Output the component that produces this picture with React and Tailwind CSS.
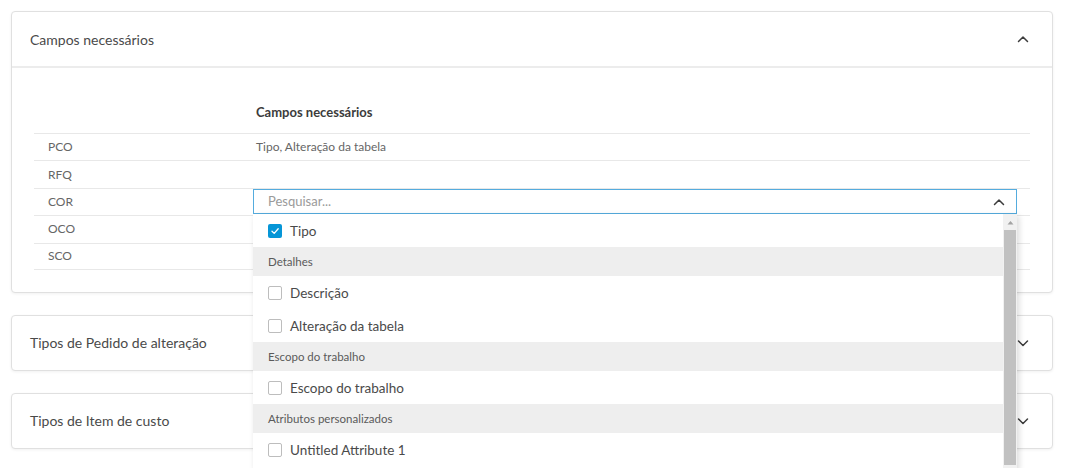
import React from "react";

const font = { fontFamily: "Lato, 'Noto Sans', sans-serif" };

const Chevron = ({ up }) => (
  <svg width="14" height="14" viewBox="0 0 14 14" fill="none">
    <path
      d={up ? "M2.5 9.5 L7 5 L11.5 9.5" : "M2.5 5 L7 9.5 L11.5 5"}
      stroke="#3c3c3c"
      strokeWidth="1.5"
      strokeLinecap="round"
      strokeLinejoin="round"
    />
  </svg>
);

const Check = ({ checked }) =>
  checked ? (
    <span className="flex h-[14px] w-[14px] items-center justify-center rounded-[2px] bg-[#0696d7]">
      <svg width="10" height="10" viewBox="0 0 10 10" fill="none">
        <path d="M2 5.2 L4.2 7.4 L8.2 2.8" stroke="#fff" strokeWidth="1.3" strokeLinecap="round" strokeLinejoin="round" />
      </svg>
    </span>
  ) : (
    <span className="h-[14px] w-[14px] rounded-[2px] border border-[#bdbdbd] bg-white" />
  );

const options = [
  { type: "item", label: "Tipo", checked: true },
  { type: "group", label: "Detalhes" },
  { type: "item", label: "Descrição" },
  { type: "item", label: "Alteração da tabela" },
  { type: "group", label: "Escopo do trabalho" },
  { type: "item", label: "Escopo do trabalho" },
  { type: "group", label: "Atributos personalizados" },
  { type: "item", label: "Untitled Attribute 1" },
];

const rows = [
  { code: "PCO", value: "Tipo, Alteração da tabela" },
  { code: "RFQ", value: "" },
  { code: "COR", value: null },
  { code: "OCO", value: "" },
  { code: "SCO", value: "" },
];

const Dropdown = () => (
  <div className="relative h-[25px] w-[764px]">
    <div className="flex h-[25px] items-center justify-between border border-[#55acde] bg-white pl-[14px] pr-[10px]">
      <span className="text-[13px] text-[#9a9a9a]">Pesquisar...</span>
      <Chevron up />
    </div>
    <div className="absolute left-0 top-[25px] z-10 flex h-[256px] w-[764px] bg-white shadow-[2px_2px_6px_rgba(0,0,0,0.15)]">
      <div className="flex-1">
        {options.map((o, i) =>
          o.type === "group" ? (
            <div key={i} className="flex h-[29px] items-center bg-[#eeeeee] pl-[15px] text-[11.5px] text-[#5a5a5a]">
              {o.label}
            </div>
          ) : (
            <div key={i} className="flex h-[33px] items-center gap-[8px] pl-[15px] text-[13.5px] text-[#4a4a4a]">
              <Check checked={o.checked} />
              <span>{o.label}</span>
            </div>
          )
        )}
      </div>
      <div className="flex w-[14px] flex-col items-center bg-[#f1f1f1]">
        <div className="flex h-[16px] items-center justify-center">
          <svg width="7" height="5" viewBox="0 0 7 5">
            <path d="M0.5 4.5 L3.5 1 L6.5 4.5 Z" fill="#a3a3a3" />
          </svg>
        </div>
        <div className="h-[235px] w-[12px] bg-[#c1c1c1]" />
      </div>
    </div>
  </div>
);

const CollapsedCard = ({ title }) => (
  <div className="flex h-[56px] items-center justify-between rounded-[4px] border border-[#e0e0e0] bg-white pl-[18px] pr-[22px] shadow-[0_1px_3px_rgba(0,0,0,0.06)]">
    <span className="text-[14px] text-[#4a4a4a]">{title}</span>
    <Chevron />
  </div>
);

export default function App() {
  return (
    <div className="min-h-[468px] bg-white px-[11px] pt-[11px]" style={font}>
      <div className="flex w-[1042px] flex-col gap-[22px]">
        <div className="rounded-[4px] border border-[#e0e0e0] bg-white shadow-[0_1px_3px_rgba(0,0,0,0.06)]">
          <div className="flex h-[56px] items-center justify-between border-b-2 border-[#ececec] pl-[18px] pr-[22px]">
            <span className="text-[14px] text-[#4a4a4a]">Campos necessários</span>
            <Chevron up />
          </div>
          <div className="px-[22px] pb-[22px] pt-[30px]">
            <div className="flex h-[35px] pt-[5px]">
              <div className="w-[219px]" />
              <div className="pl-[3px] text-[13px] font-bold text-[#3c3c3c]">Campos necessários</div>
            </div>
            {rows.map((r) => (
              <div key={r.code} className="box-border flex h-[27.4px] items-center border-t border-[#e8e8e8] last:border-b">
                <div className="w-[219px] pl-[14px] text-[12px] text-[#666]">{r.code}</div>
                {r.value === null ? (
                  <Dropdown />
                ) : (
                  <div className="pl-[3px] text-[12px] text-[#666]">{r.value}</div>
                )}
              </div>
            ))}
          </div>
        </div>
        <CollapsedCard title="Tipos de Pedido de alteração" />
        <CollapsedCard title="Tipos de Item de custo" />
      </div>
    </div>
  );
}
